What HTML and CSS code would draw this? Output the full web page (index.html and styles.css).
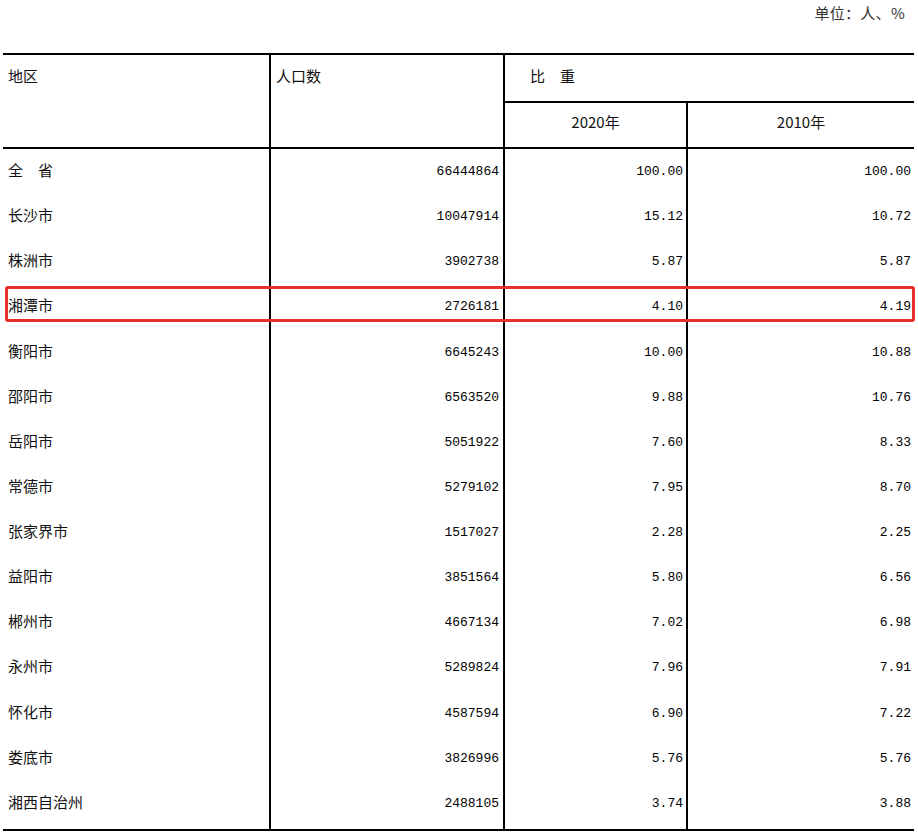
FILE: index.html
```html
<!DOCTYPE html>
<html lang="zh-CN">
<head>
<meta charset="utf-8">
<title>湖南省人口分布</title>
<link rel="stylesheet" href="styles.css">
</head>
<body>
<div class="page">
  <div class="unit">单位：人、%</div>
  <div class="table">
    <div class="head">
      <div class="hc c1 span2">地区</div>
      <div class="hc c2 span2">人口数</div>
      <div class="hc c34 group">比　重</div>
      <div class="hc c3 year">2020年</div>
      <div class="hc c4 year">2010年</div>
    </div>
    <div class="body">
      <div class="row"><div class="cell name">全　省</div><div class="cell num c2">66444864</div><div class="cell num c3">100.00</div><div class="cell num c4">100.00</div></div>
      <div class="row"><div class="cell name">长沙市</div><div class="cell num c2">10047914</div><div class="cell num c3">15.12</div><div class="cell num c4">10.72</div></div>
      <div class="row"><div class="cell name">株洲市</div><div class="cell num c2">3902738</div><div class="cell num c3">5.87</div><div class="cell num c4">5.87</div></div>
      <div class="row"><div class="cell name">湘潭市</div><div class="cell num c2">2726181</div><div class="cell num c3">4.10</div><div class="cell num c4">4.19</div></div>
      <div class="row"><div class="cell name">衡阳市</div><div class="cell num c2">6645243</div><div class="cell num c3">10.00</div><div class="cell num c4">10.88</div></div>
      <div class="row"><div class="cell name">邵阳市</div><div class="cell num c2">6563520</div><div class="cell num c3">9.88</div><div class="cell num c4">10.76</div></div>
      <div class="row"><div class="cell name">岳阳市</div><div class="cell num c2">5051922</div><div class="cell num c3">7.60</div><div class="cell num c4">8.33</div></div>
      <div class="row"><div class="cell name">常德市</div><div class="cell num c2">5279102</div><div class="cell num c3">7.95</div><div class="cell num c4">8.70</div></div>
      <div class="row"><div class="cell name">张家界市</div><div class="cell num c2">1517027</div><div class="cell num c3">2.28</div><div class="cell num c4">2.25</div></div>
      <div class="row"><div class="cell name">益阳市</div><div class="cell num c2">3851564</div><div class="cell num c3">5.80</div><div class="cell num c4">6.56</div></div>
      <div class="row"><div class="cell name">郴州市</div><div class="cell num c2">4667134</div><div class="cell num c3">7.02</div><div class="cell num c4">6.98</div></div>
      <div class="row"><div class="cell name">永州市</div><div class="cell num c2">5289824</div><div class="cell num c3">7.96</div><div class="cell num c4">7.91</div></div>
      <div class="row"><div class="cell name">怀化市</div><div class="cell num c2">4587594</div><div class="cell num c3">6.90</div><div class="cell num c4">7.22</div></div>
      <div class="row"><div class="cell name">娄底市</div><div class="cell num c2">3826996</div><div class="cell num c3">5.76</div><div class="cell num c4">5.76</div></div>
      <div class="row last"><div class="cell name">湘西自治州</div><div class="cell num c2">2488105</div><div class="cell num c3">3.74</div><div class="cell num c4">3.88</div></div>
    </div>
  </div>
  <div class="highlight"></div>
</div>
</body>
</html>
```
FILE: styles.css
```css
html, body {
  margin: 0;
  padding: 0;
  background: #fff;
}
body {
  font-family: "Noto Sans CJK SC", "Noto Sans", sans-serif;
  color: #000;
}
.page {
  position: relative;
  width: 918px;
  height: 837px;
}
.unit {
  height: 53px;
  box-sizing: border-box;
  padding: 3px 13px 0 0;
  text-align: right;
  font-size: 15px;
  line-height: 20px;
  color: #333;
  letter-spacing: 0.3px;
}
.table {
  margin-left: 3px;
  width: 911px;
  border-top: 2px solid #000;
  border-bottom: 2px solid #000;
}
.head {
  display: grid;
  grid-template-columns: 268px 234px 183px 226px;
  grid-template-rows: 48px 44px;
  border-bottom: 2px solid #000;
  font-size: 15px;
  line-height: 20px;
  color: #111;
}
.hc {
  box-sizing: border-box;
}
.c1, .c2, .c3 {
  border-right: 2px solid #000;
}
.span2 {
  grid-row: 1 / 3;
  padding: 11px 0 0 5px;
}
.head .c1 { grid-column: 1; }
.head .c2 { grid-column: 2; }
.group {
  grid-column: 3 / 5;
  grid-row: 1;
  border-bottom: 2px solid #000;
  padding: 11px 0 0 25px;
}
.year {
  grid-row: 2;
  text-align: center;
  padding-top: 9px;
}
.head .c3 { grid-column: 3; }
.head .c4 { grid-column: 4; }
.row {
  display: grid;
  grid-template-columns: 268px 234px 183px 226px;
  height: 45.14px;
}
.row.last {
  height: 48px;
}
.cell {
  box-sizing: border-box;
  padding-top: 11px;
  line-height: 20px;
}
.name {
  border-right: 2px solid #000;
  padding-left: 5px;
  font-size: 15px;
  color: #111;
}
.num {
  text-align: right;
  font-family: "Liberation Mono", "DejaVu Sans Mono", monospace;
  font-size: 13px;
  padding-top: 13px;
}
.row .c2 { padding-right: 4px; }
.row .c3 { padding-right: 3px; }
.row .c4 { padding-right: 3px; border-right: none; }
.highlight {
  position: absolute;
  left: 5px;
  top: 286px;
  width: 910px;
  height: 36px;
  box-sizing: border-box;
  border: 3px solid #e6302b;
  border-radius: 3px;
}
```
